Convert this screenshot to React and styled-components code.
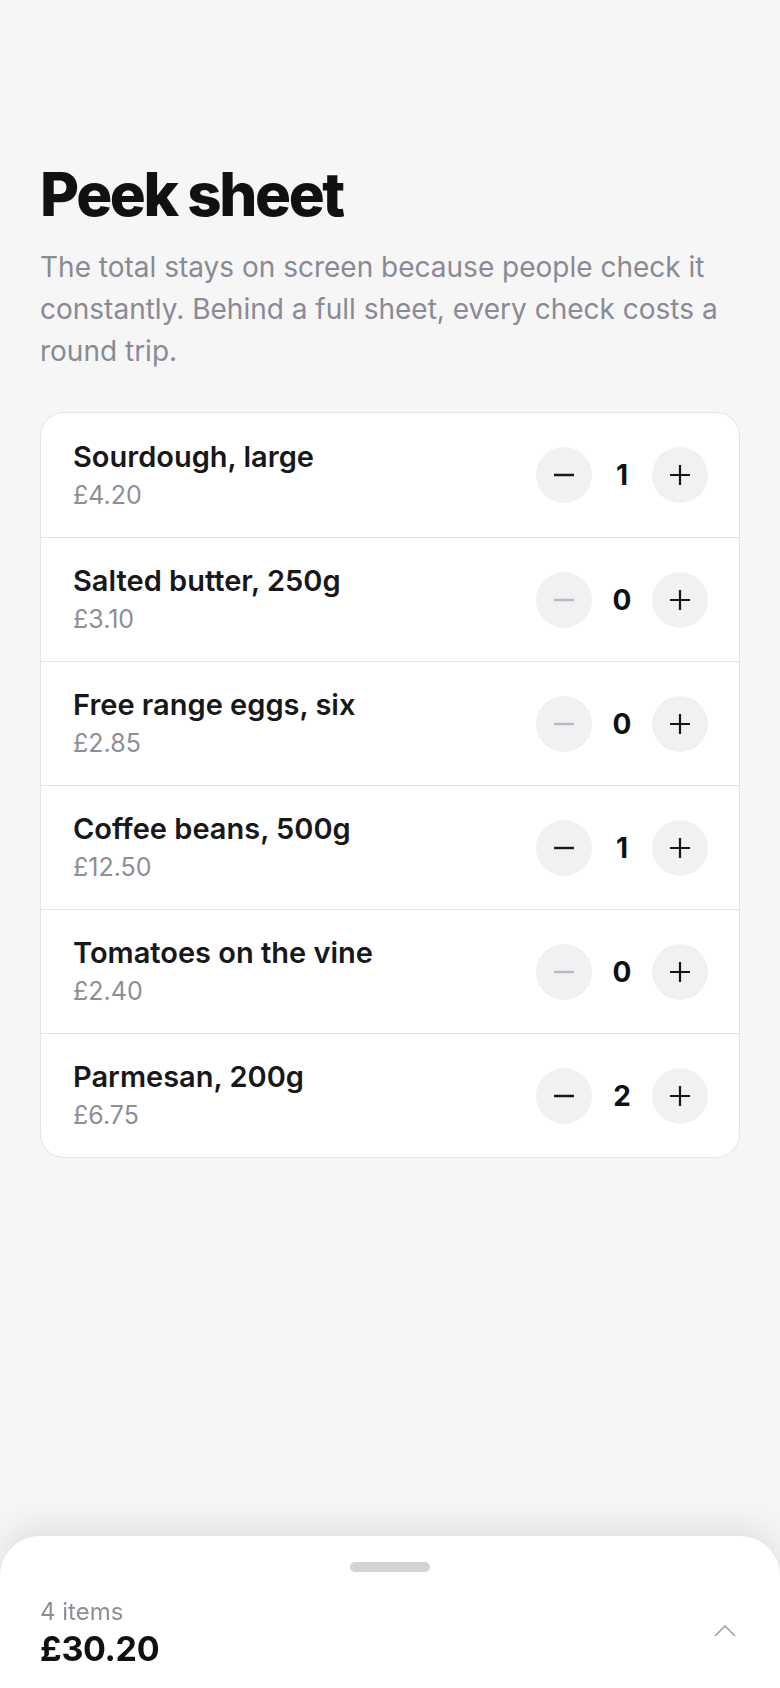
import React from "react";
import styled, { createGlobalStyle } from "styled-components";

const Global = createGlobalStyle`
  html, body { margin: 0; padding: 0; background: #f6f6f7; }
  body { font-family: Inter, "Noto Sans", sans-serif; color: #18181b; -webkit-font-smoothing: antialiased; }
  * { box-sizing: border-box; }
`;

const Page = styled.main`
  min-height: 1688px;
  padding: 161px 40px 200px;
`;

const Title = styled.h1`
  margin: 0;
  font-size: 60px;
  line-height: 1.1;
  font-weight: 800;
  letter-spacing: -0.04em;
  color: #111113;
`;

const Lead = styled.p`
  margin: 19px 0 0;
  font-size: 28px;
  line-height: 42px;
  color: #8a8a94;
  font-weight: 400;
`;

const Card = styled.section`
  margin-top: 40px;
  background: #fff;
  border: 1px solid #e4e4e7;
  border-radius: 24px;
  overflow: hidden;
`;

const Row = styled.div`
  display: flex;
  align-items: center;
  justify-content: space-between;
  height: 124px;
  padding: 0 31px 0 32px;
  & + & { border-top: 1px solid #e4e4e7; }
`;

const Info = styled.div`
  display: flex;
  flex-direction: column;
`;

const Name = styled.div`
  font-size: 29px;
  line-height: 36px;
  font-weight: 600;
  color: #18181b;
`;

const Price = styled.div`
  margin-top: 3px;
  font-size: 25px;
  line-height: 34px;
  color: #8e8e96;
`;

const Stepper = styled.div`
  display: flex;
  align-items: center;
  gap: 12px;
`;

const StepButton = styled.button`
  width: 56px;
  height: 56px;
  border-radius: 50%;
  border: none;
  background: #f1f1f3;
  display: flex;
  align-items: center;
  justify-content: center;
  padding: 0;
  color: ${(p) => (p.disabled ? "#b9b9be" : "#18181b")};
  cursor: ${(p) => (p.disabled ? "default" : "pointer")};
`;

const Count = styled.span`
  width: 36px;
  text-align: center;
  font-size: 28px;
  font-weight: 700;
  color: #111113;
`;

const Sheet = styled.div`
  position: fixed;
  left: 0;
  right: 0;
  bottom: 0;
  height: 152px;
  background: #fff;
  border-radius: 40px 40px 0 0;
  box-shadow: 0 -8px 36px rgba(0, 0, 0, 0.1);
  padding: 26px 40px 0;
`;

const Handle = styled.div`
  width: 80px;
  height: 10px;
  border-radius: 5px;
  background: #d4d4d8;
  margin: 0 auto;
`;

const SheetBar = styled.div`
  margin-top: 25px;
  display: flex;
  align-items: center;
  justify-content: space-between;
`;

const Summary = styled.div`
  display: flex;
  flex-direction: column;
`;

const ItemCount = styled.div`
  font-size: 24px;
  line-height: 30px;
  color: #8e8e96;
`;

const Total = styled.div`
  margin-top: 2px;
  font-size: 34px;
  line-height: 40px;
  font-weight: 700;
  color: #111113;
  letter-spacing: -0.01em;
`;

const Toggle = styled.button`
  border: none;
  background: none;
  padding: 0;
  width: 40px;
  height: 40px;
  margin-right: -5px;
  margin-top: -4px;
  display: flex;
  align-items: center;
  justify-content: center;
  color: #a1a1aa;
`;

const Minus = () => (
  <svg width="22" height="22" viewBox="0 0 22 22" fill="none">
    <path d="M1 11h20" stroke="currentColor" strokeWidth="2.4" strokeLinecap="butt" />
  </svg>
);
const Plus = () => (
  <svg width="22" height="22" viewBox="0 0 22 22" fill="none">
    <path d="M1 11h20M11 1v20" stroke="currentColor" strokeWidth="2.2" strokeLinecap="butt" />
  </svg>
);
const ChevronUp = () => (
  <svg width="22" height="12" viewBox="0 0 22 12" fill="none">
    <path d="M1 11l10-10 10 10" stroke="currentColor" strokeWidth="1.6" />
  </svg>
);

const items = [
  { name: "Sourdough, large", price: 4.2, qty: 1 },
  { name: "Salted butter, 250g", price: 3.1, qty: 0 },
  { name: "Free range eggs, six", price: 2.85, qty: 0 },
  { name: "Coffee beans, 500g", price: 12.5, qty: 1 },
  { name: "Tomatoes on the vine", price: 2.4, qty: 0 },
  { name: "Parmesan, 200g", price: 6.75, qty: 2 },
];

export default function App() {
  const count = items.reduce((s, i) => s + i.qty, 0);
  const total = items.reduce((s, i) => s + i.qty * i.price, 0);
  return (
    <>
      <Global />
      <Page>
        <Title>Peek sheet</Title>
        <Lead>
          The total stays on screen because people check it constantly. Behind a full sheet, every check costs a round trip.
        </Lead>
        <Card>
          {items.map((it) => (
            <Row key={it.name}>
              <Info>
                <Name>{it.name}</Name>
                <Price>£{it.price.toFixed(2)}</Price>
              </Info>
              <Stepper>
                <StepButton disabled={it.qty === 0} aria-label="Decrease">
                  <Minus />
                </StepButton>
                <Count>{it.qty}</Count>
                <StepButton aria-label="Increase">
                  <Plus />
                </StepButton>
              </Stepper>
            </Row>
          ))}
        </Card>
      </Page>
      <Sheet>
        <Handle />
        <SheetBar>
          <Summary>
            <ItemCount>{count} items</ItemCount>
            <Total>£{total.toFixed(2)}</Total>
          </Summary>
          <Toggle aria-label="Expand">
            <ChevronUp />
          </Toggle>
        </SheetBar>
      </Sheet>
    </>
  );
}
